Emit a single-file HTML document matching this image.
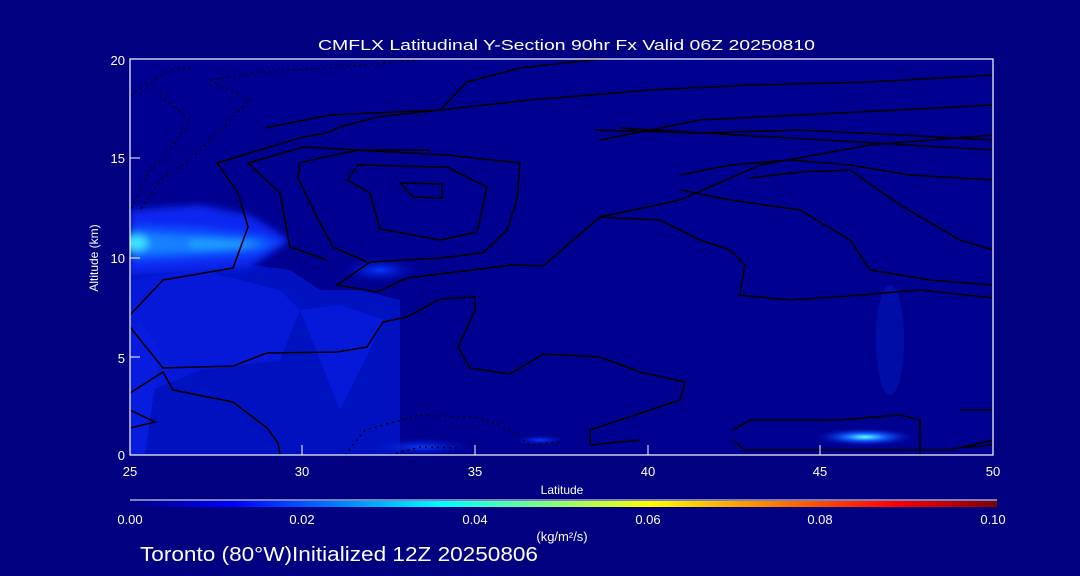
<!DOCTYPE html>
<html><head><meta charset="utf-8"><style>
html,body{margin:0;padding:0;background:#000080;width:1080px;height:576px;overflow:hidden}
svg{display:block}
text{font-family:"Liberation Sans",sans-serif;fill:#fff}
</style></head><body>
<svg width="1080" height="576" viewBox="0 0 1080 576">
<defs>
<linearGradient id="cb" x1="0" x2="1">
<stop offset="0" stop-color="#000080"/><stop offset="0.12" stop-color="#0000ff"/>
<stop offset="0.36" stop-color="#00ffff"/><stop offset="0.6" stop-color="#ffff00"/>
<stop offset="0.88" stop-color="#ff0000"/><stop offset="1" stop-color="#800000"/>
</linearGradient>
<radialGradient id="g2"><stop offset="0" stop-color="#60ffff"/><stop offset="0.4" stop-color="#1060ff"/><stop offset="1" stop-color="#0010c0" stop-opacity="0"/></radialGradient>
<radialGradient id="g3"><stop offset="0" stop-color="#0838ff"/><stop offset="1" stop-color="#0010c0" stop-opacity="0"/></radialGradient>
<filter id="bl"><feGaussianBlur stdDeviation="4"/></filter>
<clipPath id="pc"><rect x="130" y="59" width="863" height="396"/></clipPath>
</defs>
<rect x="130" y="59" width="863" height="396" fill="#000090"/>
<g clip-path="url(#pc)">
<polygon points="130,265 230,262 290,270 320,290 360,290 400,300 400,455 130,455" fill="#0012c0"/>
<polygon points="130,280 200,270 280,290 300,310 280,360 200,370 130,400" fill="#0618d8"/>
<polygon points="300,310 340,305 385,320 340,410" fill="#0618d8"/>
<polygon points="130,340 140,320 160,350 145,455 130,455" fill="#081ce0"/>
<g filter="url(#bl)">
<polygon points="130,210 200,205 250,215 290,240 250,268 130,275" fill="#0a28f0"/>
<polygon points="130,225 200,228 260,235 285,243 255,255 200,258 130,262" fill="#0c48ff"/>
<polygon points="130,232 190,236 250,240 270,244 240,249 190,252 130,255" fill="#1880ff"/>
<ellipse cx="134" cy="243" rx="14" ry="7" fill="#40e8ff"/>
<polygon points="190,240 240,242 260,244 240,247 190,248" fill="#20a8ff"/>
</g>
<ellipse cx="380" cy="270" rx="40" ry="13" fill="url(#g3)"/>
<ellipse cx="420" cy="447" rx="55" ry="9" fill="url(#g3)"/>
<ellipse cx="540" cy="440" rx="25" ry="5" fill="url(#g3)"/>
<ellipse cx="890" cy="340" rx="14" ry="55" fill="#0018b8" opacity="0.6"/>
<ellipse cx="865" cy="437" rx="50" ry="9" fill="url(#g2)"/>
<g fill="none" stroke="#000" stroke-width="1.6">
<path d="M130,315 L163,280 L233,268 L248,227 L238,193 L217,163 L303,137 L327,133 L340,127 L377,117 L440,110 L467,82 L520,68 L620,57"/>
<path d="M327,260 L290,247 L280,193 L248,163 L303,147 L447,155 L520,163 L517,200 L507,230 L483,253 L440,258 L370,262 L337,285 L377,292 L407,278 L513,265 L543,266 L600,217 L680,200 L760,165 L870,145 L993,135"/>
<path d="M367,262 L333,247 L317,217 L298,178 L300,163 L320,158 L360,150 L430,150"/>
<path d="M347,180 L358,165 L447,167 L487,187 L477,232 L440,240 L380,229 L370,193 Z"/>
<path d="M400,183 L442,184 L442,198 L413,197 Z"/>
<path d="M130,393 L163,372 L173,390 L233,402 L267,428 L278,443 L280,455"/>
<path d="M130,327 L163,368 L233,366 L267,353 L337,352 L367,347 L383,322 L407,317 L440,299 L475,297 L475,310 L458,347 L470,368 L510,374 L543,354 L600,357 L640,372 L685,382 L680,400 L620,420 L590,430 L590,445 L640,440"/>
<path d="M130,410 L155,422 L130,428"/>
<path d="M265,128 L330,115 L440,110 L530,100 L650,90 L750,85 L870,82 L993,75"/>
<path d="M600,140 L700,120 L800,115 L993,105 M595,130 L700,133 L800,130 L900,135 L993,140 M620,128 L993,150"/>
<path d="M680,175 L730,165 L790,160 L850,165 L910,175 L993,180"/>
<path d="M680,190 L730,200 L800,210 L850,240 L870,270 L930,280 L993,285"/>
<path d="M750,178 L800,172 L850,170 L900,205 L960,240 L993,250"/>
<path d="M600,217 L660,220 L700,240 L730,250 L745,265 L740,295 L790,300 L860,295 L920,290 L993,298"/>
<path d="M733,430 L750,420 L840,420 L900,415 L920,420 L920,455"/>
<path d="M733,440 L745,450 L820,450 L900,450 L950,450 L993,440"/>
<path d="M955,448 L993,445 M960,410 L993,410"/>
</g>
<g fill="none" stroke="#000" stroke-width="1.4" stroke-dasharray="2,4">
<path d="M130,95 L170,70 L190,68"/><path d="M160,95 L190,120 L170,150 L150,170 L135,200 L130,210"/>
<path d="M210,80 L260,72 L330,68 L420,60"/><path d="M210,80 L250,100 L230,120 L190,160 L160,180 L140,210"/>
<path d="M345,455 L365,430 L420,415 L480,418 L510,430 L530,445 L560,442"/>
<path d="M390,455 L420,447 L460,448"/>
</g>
</g>
<rect x="130" y="59" width="863" height="396" fill="none" stroke="#fff" stroke-width="1.2"/>
<g stroke="#fff" stroke-width="1">
<line x1="302" y1="455" x2="302" y2="445"/><line x1="475" y1="455" x2="475" y2="445"/><line x1="648" y1="455" x2="648" y2="445"/><line x1="820" y1="455" x2="820" y2="445"/>
<line x1="130" y1="357" x2="140" y2="357"/><line x1="130" y1="258" x2="140" y2="258"/><line x1="130" y1="158" x2="140" y2="158"/>
</g>
<g font-size="13">
<text x="318" y="50" font-size="15" textLength="497" lengthAdjust="spacingAndGlyphs">CMFLX Latitudinal Y-Section 90hr  Fx Valid 06Z 20250810</text>
<text x="125" y="65" text-anchor="end">20</text>
<text x="125" y="163" text-anchor="end">15</text>
<text x="125" y="263" text-anchor="end">10</text>
<text x="125" y="363" text-anchor="end">5</text>
<text x="125" y="460" text-anchor="end">0</text>
<text x="130" y="476" text-anchor="middle">25</text><text x="302" y="476" text-anchor="middle">30</text><text x="475" y="476" text-anchor="middle">35</text><text x="648" y="476" text-anchor="middle">40</text><text x="820" y="476" text-anchor="middle">45</text><text x="993" y="476" text-anchor="middle">50</text>
<text x="562" y="494" text-anchor="middle" font-size="12">Latitude</text>
<text transform="translate(98,258) rotate(-90)" text-anchor="middle" font-size="12">Altitude (km)</text>
</g>
<line x1="130" y1="500" x2="997" y2="500" stroke="#fff"/>
<rect x="130" y="501" width="867" height="6" fill="url(#cb)"/>
<g font-size="13" text-anchor="middle">
<text x="130" y="524">0.00</text><text x="302" y="524">0.02</text><text x="475" y="524">0.04</text><text x="648" y="524">0.06</text><text x="820" y="524">0.08</text><text x="993" y="524">0.10</text>
<text x="562" y="541">(kg/m²/s)</text>
</g>
<text x="140" y="561" font-size="20" textLength="398" lengthAdjust="spacingAndGlyphs">Toronto (80°W)Initialized 12Z 20250806</text>
</svg>
</body></html>
